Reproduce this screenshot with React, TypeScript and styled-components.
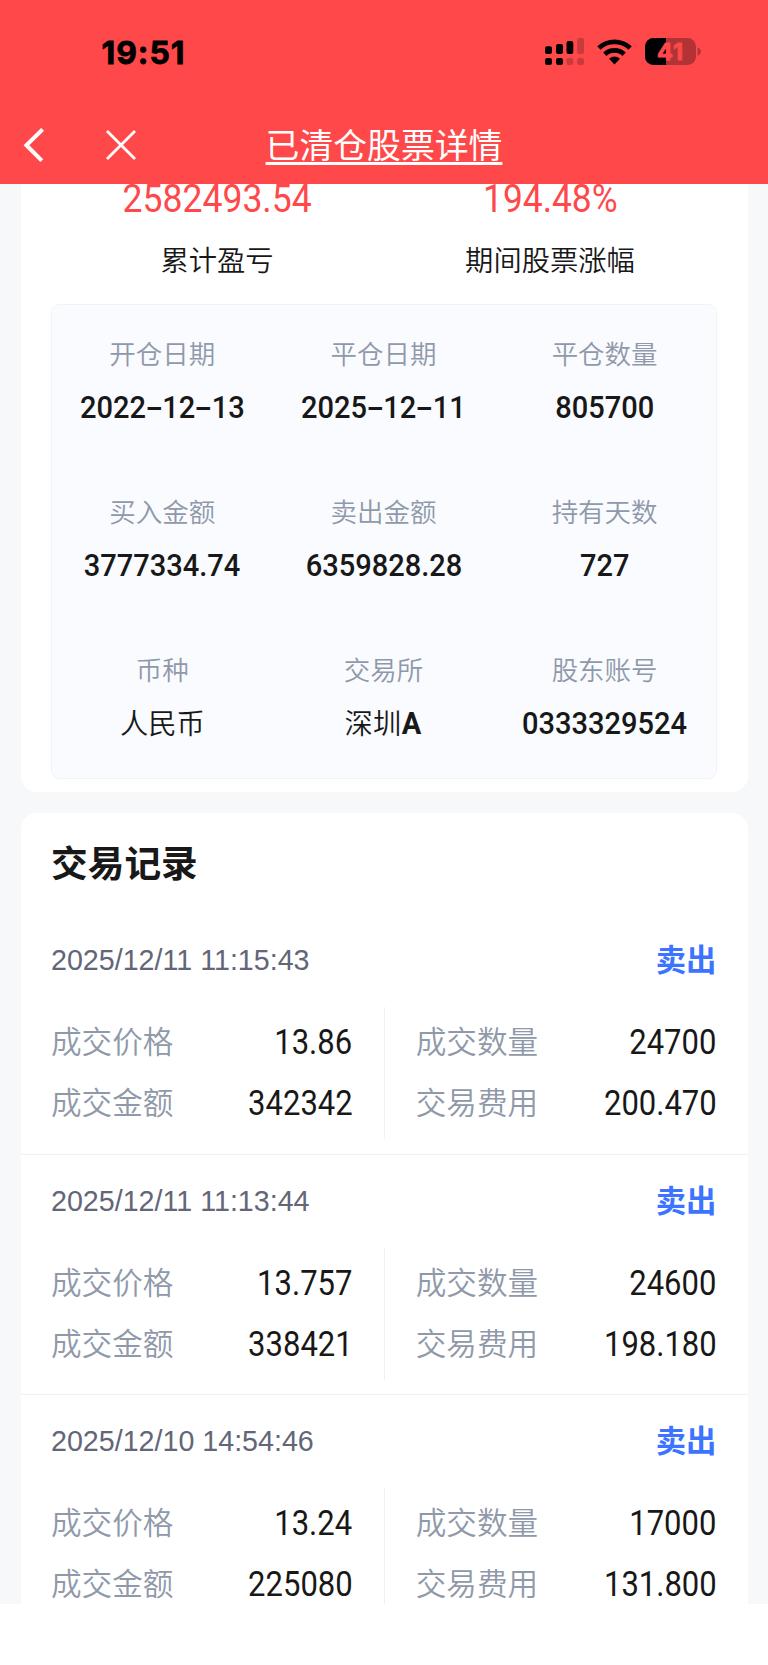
import React from "react";
import styled, { createGlobalStyle } from "styled-components";

const GlobalStyle = createGlobalStyle`
  * { box-sizing: border-box; }
  html, body { margin: 0; padding: 0; background: #ffffff; }
  body { font-family: "Noto Sans CJK SC", sans-serif; color: #181818; }
`;

const Screen = styled.div`
  width: 768px;
  height: 1665px;
  overflow: hidden;
  display: flex;
  flex-direction: column;
  background: #ffffff;
`;

const Header = styled.header`
  flex: none;
  height: 184px;
  background: #ff484a;
  display: flex;
  flex-direction: column;
`;

const StatusBar = styled.div`
  height: 104px;
  padding: 0 67px 0 101.5px;
  display: flex;
  align-items: center;
  justify-content: space-between;
`;

const Clock = styled.span`
  font-family: Inter, sans-serif;
  font-size: 31.8px;
  font-weight: 700;
  line-height: 40px;
  letter-spacing: 1px;
  color: #000000;
  -webkit-text-stroke: 0.8px #000000;
  padding-top: 2px;
`;

const StatusIcons = styled.svg`
  display: block;
`;

const NavBar = styled.div`
  height: 80px;
  padding: 0 23px;
  display: grid;
  grid-template-columns: 1fr auto 1fr;
  align-items: center;
`;

const NavActions = styled.div`
  display: flex;
  align-items: center;
  gap: 61px;
  padding-top: 2px;
`;

const Title = styled.h1`
  margin: 0;
  font-size: 33.85px;
  font-weight: 400;
  line-height: 46px;
  color: #ffffff;
  text-decoration: underline;
  text-decoration-thickness: 3px;
  text-underline-offset: 3.5px;
  text-decoration-skip-ink: none;
`;

const Scroll = styled.main`
  flex: none;
  height: 1420px;
  overflow: hidden;
  padding: 0 20.5px;
  background: #f7f8fa;
  display: flex;
  flex-direction: column;
  gap: 21px;
`;

const Card = styled.section<{ $top?: boolean }>`
  flex: none;
  background: #ffffff;
  border-radius: ${(p) => (p.$top ? "0 0 16px 16px" : "16px")};
`;

const CardFoot = styled.div`
  height: 13px;
`;

const Summary = styled.div`
  height: 120px;
  padding: 0 31px 0 30px;
  display: grid;
  grid-template-columns: 1fr 1fr;
  text-align: center;
`;

const SummaryLabel = styled.div`
  font-size: 28.3px;
  font-weight: 350;
  line-height: 40px;
  margin-top: 25px;
`;

const Digits = styled.span<{
  $size: number;
  $weight: number;
  $squeeze: number;
  $origin?: string;
}>`
  display: inline-block;
  font-family: Roboto, sans-serif;
  font-size: ${(p) => p.$size}px;
  font-weight: ${(p) => p.$weight};
  transform: scaleX(${(p) => p.$squeeze});
  transform-origin: ${(p) => p.$origin ?? "center"};
`;

/* A hyphen as wide as a digit, like in a tabular face. */
const Dash = styled.span`
  display: inline-block;
  width: 17.7px;
  text-align: center;
  transform: scaleX(1.8);
`;

const SummaryValue = styled.div`
  height: 30px;
  line-height: 30px;
  color: #ff484a;
`;

const Details = styled.div`
  height: 475px;
  margin: 0 30.8px;
  padding-top: 28px;
  border: 1.5px solid #eff3f8;
  border-radius: 9px;
  background: #fafbff;
  display: grid;
  grid-template-columns: repeat(3, 1fr);
  grid-auto-rows: 157.8px;
  text-align: center;
`;

const Detail = styled.div`
  margin-left: -1px;
`;

const DetailLabel = styled.div`
  font-size: 26.5px;
  font-weight: 350;
  line-height: 40px;
  color: #8f99a9;
`;

const DetailValue = styled.div`
  height: 40px;
  margin-top: 13.4px;
  line-height: 40px;
  font-size: 28.3px;
  font-weight: 350;
  white-space: nowrap;
`;

const SectionTitle = styled.h2`
  margin: 0;
  padding: 24px 31px 0 30.5px;
  height: 101.3px;
  font-size: 36.7px;
  line-height: 48px;
  font-weight: 700;
`;

const Record = styled.article`
  height: 240.4px;
  border-bottom: 1px solid #eff0f3;
`;

const RecordHead = styled.div`
  height: 93px;
  padding: 26px 31px 0 30.5px;
  display: flex;
  justify-content: space-between;
  line-height: 40px;
`;

const DateText = styled.time`
  font-family: "Liberation Sans", Arial, sans-serif;
  font-size: 28.65px;
  color: #626677;
`;

const Side = styled.span`
  font-size: 30.4px;
  font-weight: 700;
  color: #3c74ff;
  line-height: 36px;
`;

const RecordBody = styled.div`
  height: 132px;
  padding: 0 31px 0 30.5px;
  display: grid;
  grid-template-columns: 1fr 1fr;
`;

const RecordColumn = styled.div<{ $divided?: boolean }>`
  padding: ${(p) => (p.$divided ? "4.5px 0 0 31px" : "4.5px 31.5px 0 0")};
  border-left: ${(p) => (p.$divided ? "1px solid #eff0f6" : "none")};
`;

const Field = styled.div`
  height: 61px;
  display: flex;
  align-items: center;
  justify-content: space-between;
`;

const FieldLabel = styled.span`
  font-size: 30.6px;
  font-weight: 350;
  line-height: 44px;
  padding-bottom: 4px;
  color: #8f99a9;
`;

const details: [string, string][] = [
  ["开仓日期", "2022-12-13"],
  ["平仓日期", "2025-12-11"],
  ["平仓数量", "805700"],
  ["买入金额", "3777334.74"],
  ["卖出金额", "6359828.28"],
  ["持有天数", "727"],
  ["币种", "人民币"],
  ["交易所", "深圳A"],
  ["股东账号", "0333329524"],
];

const records = [
  { time: "2025/12/11 11:15:43", price: "13.86", amount: "342342", count: "24700", fee: "200.470" },
  { time: "2025/12/11 11:13:44", price: "13.757", amount: "338421", count: "24600", fee: "198.180" },
  { time: "2025/12/10 14:54:46", price: "13.24", amount: "225080", count: "17000", fee: "131.800" },
];

/* Splits a value so that Latin characters and digits get the numeric face. */
function MixedValue({ text }: { text: string }) {
  return (
    <>
      {text.split(/([\x20-\x7e]+)/).filter(Boolean).map((part, i) =>
        /^[\x20-\x7e]/.test(part) ? (
          <Digits key={i} $size={31.5} $weight={part === "A" ? 700 : 500} $squeeze={0.922}>
            {part.split(/(-)/).map((piece, j) =>
              piece === "-" ? <Dash key={j}>-</Dash> : <React.Fragment key={j}>{piece}</React.Fragment>
            )}
          </Digits>
        ) : (
          <React.Fragment key={i}>{part}</React.Fragment>
        )
      )}
    </>
  );
}

function FieldRow({ label, value }: { label: string; value: string }) {
  return (
    <Field>
      <FieldLabel>{label}</FieldLabel>
      <Digits $size={34.3} $weight={400} $squeeze={0.904} $origin="right center">
        {value}
      </Digits>
    </Field>
  );
}

function Indicators() {
  return (
    <StatusIcons width="157" height="28" viewBox="544 38 157 28">
      <g fill="#000">
        <rect x="545" y="46.3" width="7" height="7.7" rx="2" />
        <rect x="556" y="44" width="7" height="10" rx="2" />
        <rect x="566.5" y="41" width="6.8" height="13" rx="2" />
        <rect x="545" y="58" width="7" height="7" rx="2.2" />
        <rect x="556" y="58" width="7" height="7" rx="2.2" />
      </g>
      <g fill="#c93a3c">
        <rect x="577.2" y="38" width="6.8" height="16" rx="2" />
        <rect x="566.5" y="58" width="6.8" height="7" rx="2.2" />
        <rect x="577.2" y="58" width="6.8" height="7" rx="2.2" />
      </g>
      <g fill="none" stroke="#000" strokeWidth="4.8">
        <path d="M598.9 47.9a23 23 0 0 1 31.2 0" />
        <path d="M604.8 54.2a14.2 14.2 0 0 1 19.4 0" />
      </g>
      <path d="M609 58.8q5.5-4.6 11 0l-5.5 5.6z" fill="#000" />
      <clipPath id="battery">
        <rect x="645" y="38" width="51" height="27" rx="8.5" />
      </clipPath>
      <g clipPath="url(#battery)">
        <rect x="645" y="38" width="51" height="27" fill="#b23335" />
        <rect x="645" y="38" width="21" height="27" fill="#000" />
      </g>
      <path d="M697.6 47.2q3.2 1.2 3.2 4.3t-3.2 4.3z" fill="#b23335" />
      <text
        x="670.6"
        y="60"
        textAnchor="middle"
        fontFamily="Inter, sans-serif"
        fontWeight="700"
        fontSize="23.5"
        letterSpacing="1"
        fill="#ff484a"
        stroke="#ff484a"
        strokeWidth="0.9"
      >
        41
      </text>
    </StatusIcons>
  );
}

export default function App() {
  return (
    <Screen>
      <GlobalStyle />
      <Header>
        <StatusBar>
          <Clock>19:51</Clock>
          <Indicators />
        </StatusBar>
        <NavBar>
          <NavActions>
            <svg width="22" height="34" viewBox="0 0 22 34" fill="none" stroke="#fff" strokeWidth="4">
              <path d="M19.6 1.4 3.4 17.2 18.8 32.6" />
            </svg>
            <svg width="30" height="30" viewBox="0 0 30 30" fill="none" stroke="#fff" strokeWidth="2.8">
              <path d="M1 1 29 29M29 1 1 29" />
            </svg>
          </NavActions>
          <Title>已清仓股票详情</Title>
        </NavBar>
      </Header>
      <Scroll>
        <Card $top>
          <Summary>
            <div>
              <SummaryValue>
                <Digits $size={38} $weight={400} $squeeze={0.935}>2582493.54</Digits>
              </SummaryValue>
              <SummaryLabel>累计盈亏</SummaryLabel>
            </div>
            <div>
              <SummaryValue>
                <Digits $size={38} $weight={400} $squeeze={0.93}>194.48%</Digits>
              </SummaryValue>
              <SummaryLabel>期间股票涨幅</SummaryLabel>
            </div>
          </Summary>
          <Details>
            {details.map(([label, value]) => (
              <Detail key={label}>
                <DetailLabel>{label}</DetailLabel>
                <DetailValue>
                  <MixedValue text={value} />
                </DetailValue>
              </Detail>
            ))}
          </Details>
          <CardFoot />
        </Card>
        <Card>
          <SectionTitle>交易记录</SectionTitle>
          {records.map((r) => (
            <Record key={r.time}>
              <RecordHead>
                <DateText>{r.time}</DateText>
                <Side>卖出</Side>
              </RecordHead>
              <RecordBody>
                <RecordColumn>
                  <FieldRow label="成交价格" value={r.price} />
                  <FieldRow label="成交金额" value={r.amount} />
                </RecordColumn>
                <RecordColumn $divided>
                  <FieldRow label="成交数量" value={r.count} />
                  <FieldRow label="交易费用" value={r.fee} />
                </RecordColumn>
              </RecordBody>
            </Record>
          ))}
        </Card>
      </Scroll>
    </Screen>
  );
}
